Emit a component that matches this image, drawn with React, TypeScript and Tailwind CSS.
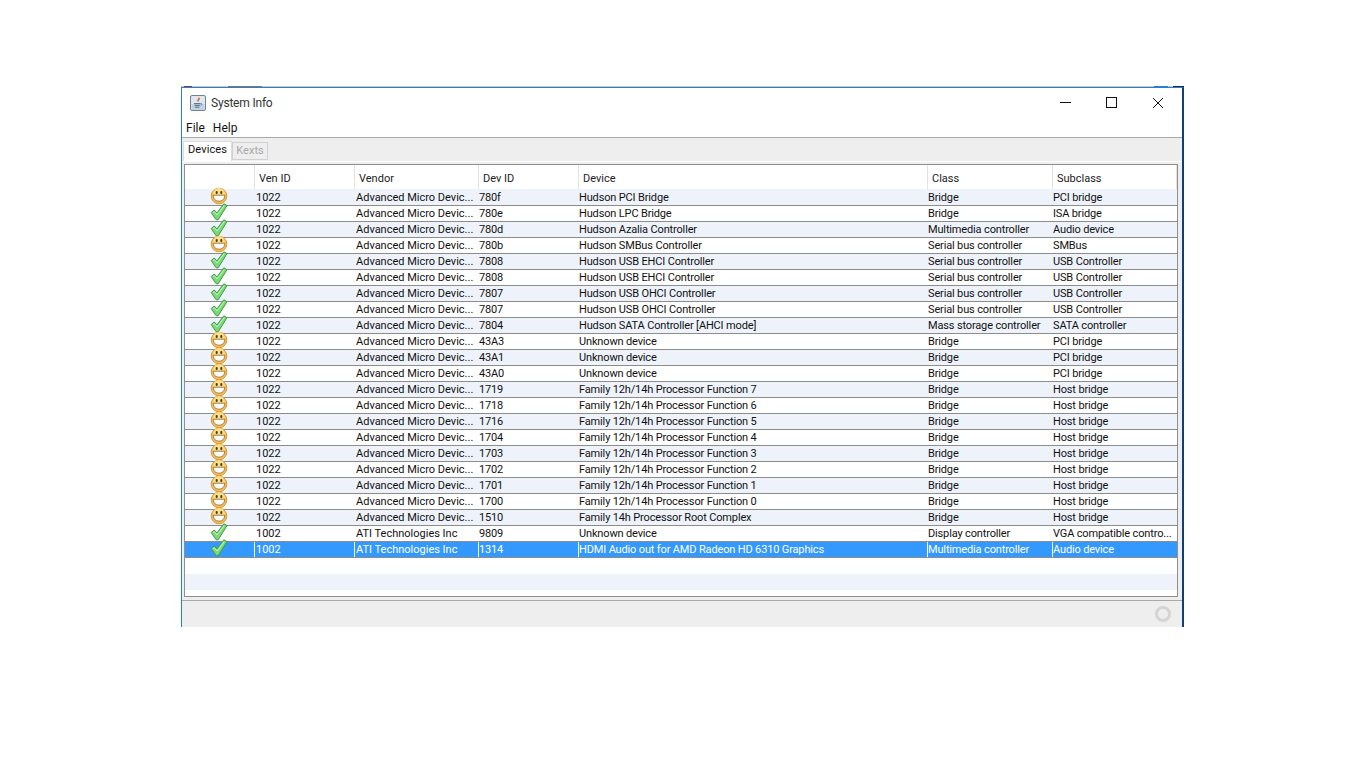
import React from "react";

type Row = [string, string, string, string, string, string, string];
const A = "Advanced Micro Devic...";
const rows: Row[] = [
  ["s","1022",A,"780f","Hudson PCI Bridge","Bridge","PCI bridge"],
  ["c","1022",A,"780e","Hudson LPC Bridge","Bridge","ISA bridge"],
  ["c","1022",A,"780d","Hudson Azalia Controller","Multimedia controller","Audio device"],
  ["s","1022",A,"780b","Hudson SMBus Controller","Serial bus controller","SMBus"],
  ["c","1022",A,"7808","Hudson USB EHCI Controller","Serial bus controller","USB Controller"],
  ["c","1022",A,"7808","Hudson USB EHCI Controller","Serial bus controller","USB Controller"],
  ["c","1022",A,"7807","Hudson USB OHCI Controller","Serial bus controller","USB Controller"],
  ["c","1022",A,"7807","Hudson USB OHCI Controller","Serial bus controller","USB Controller"],
  ["c","1022",A,"7804","Hudson SATA Controller [AHCI mode]","Mass storage controller","SATA controller"],
  ["s","1022",A,"43A3","Unknown device","Bridge","PCI bridge"],
  ["s","1022",A,"43A1","Unknown device","Bridge","PCI bridge"],
  ["s","1022",A,"43A0","Unknown device","Bridge","PCI bridge"],
  ["s","1022",A,"1719","Family 12h/14h Processor Function 7","Bridge","Host bridge"],
  ["s","1022",A,"1718","Family 12h/14h Processor Function 6","Bridge","Host bridge"],
  ["s","1022",A,"1716","Family 12h/14h Processor Function 5","Bridge","Host bridge"],
  ["s","1022",A,"1704","Family 12h/14h Processor Function 4","Bridge","Host bridge"],
  ["s","1022",A,"1703","Family 12h/14h Processor Function 3","Bridge","Host bridge"],
  ["s","1022",A,"1702","Family 12h/14h Processor Function 2","Bridge","Host bridge"],
  ["s","1022",A,"1701","Family 12h/14h Processor Function 1","Bridge","Host bridge"],
  ["s","1022",A,"1700","Family 12h/14h Processor Function 0","Bridge","Host bridge"],
  ["s","1022",A,"1510","Family 14h Processor Root Complex","Bridge","Host bridge"],
  ["c","1002","ATI Technologies Inc","9809","Unknown device","Display controller","VGA compatible contro..."],
  ["c","1002","ATI Technologies Inc","1314","HDMI Audio out for AMD Radeon HD 6310 Graphics","Multimedia controller","Audio device"],
];

const widths = ["w-[70px]","w-[100px]","w-[124px]","w-[100px]","w-[349px]","w-[125px]","w-[124px]"];

function Smile() {
  return (
    <svg width="18" height="18" viewBox="0 0 18 18">
      <circle cx="9" cy="9" r="7.8" fill="#f5bf52" stroke="#d89a3c" strokeWidth="1" />
      <circle cx="9" cy="6.8" r="5.8" fill="#fbdf8a" />
      <rect x="5.7" y="4" width="2" height="3" rx="1" fill="#54391a" />
      <rect x="10.3" y="4" width="2" height="3" rx="1" fill="#54391a" />
      <path d="M3.2 8.2h11.6c0 3.8-2.5 6-5.8 6s-5.8-2.2-5.8-6z" fill="#fff" stroke="#8a6228" strokeWidth="0.8" />
    </svg>
  );
}

function Check() {
  return (
    <svg width="18" height="18" viewBox="0 0 18 18">
      <path d="M1.2 9.6 L4.2 7 L6.9 10 L13.8 0.8 L17 2.6 L8.2 16.8 L6.2 16.8 Z" fill="#7bd977" stroke="#3d9c48" strokeWidth="1" strokeLinejoin="round" />
      <path d="M3.2 9.6 L4.3 8.7 L7.2 12 L14.2 2.6" fill="none" stroke="#c9f4c4" strokeWidth="1" />
    </svg>
  );
}

function JavaIcon() {
  return (
    <svg width="16" height="16" viewBox="0 0 16 16">
      <rect x="0.5" y="0.5" width="15" height="15" rx="1.5" fill="#dfe6ee" stroke="#6f8296" />
      <rect x="1.5" y="9" width="13" height="6" fill="#c3d0de" />
      <path d="M8.5 1.8c1.2 1.6-2 2.6-1 4.4 .4 .7 1.2 .9 1.2 .9-1.4-1.2 2-2.4 .9-4.2-.3-.4-.7-.8-1.1-1.1z" fill="#e2571e" />
      <path d="M4 8.6h6.5M4.6 10.4h5.2M5 12.2h4.4" stroke="#4f6f96" strokeWidth="1" fill="none" />
      <path d="M10.6 8.4c1.8-.2 1.8 1.6 0 1.8" stroke="#4f6f96" strokeWidth="0.8" fill="none" />
    </svg>
  );
}

export default function App() {
  return (
    <div
      className="h-[768px] w-[1366px] overflow-hidden bg-white pl-[181px] pt-[86px] text-[11px] text-[#111]"
      style={{ fontFamily: 'Roboto, "Liberation Sans", sans-serif' }}
    >
      <div className="w-[1003px]">
        <div className="flex h-[1px] bg-[#c8c8c8]">
          <div className="ml-[3px] w-[8px] bg-[#6a4a4a]" />
          <div className="ml-[36px] w-[34px] bg-[#8a6f70]" />
          <div className="ml-[892px] w-[14px] bg-[#2a7fd0]" />
          <div className="ml-[5px] w-[11px] bg-[#10304f]" />
        </div>
        <div className="flex h-[540px] flex-col border-l border-r-2 border-t border-l-[#2a7fd0] border-r-[#0f3f78] border-t-[#2a7fd0] bg-white">
          <div className="flex h-[29px] shrink-0 items-center pl-[8px] pt-[1px]">
            <JavaIcon />
            <span className="ml-[5px] text-[12px] tracking-[-0.2px] text-[#333]">System Info</span>
            <div className="ml-auto flex h-full items-center pb-[1px]">
              <svg className="mr-[35px]" width="11" height="11" viewBox="0 0 11 11"><path d="M0 5.5h11" stroke="#111" strokeWidth="1" /></svg>
              <svg className="mr-[35px]" width="11" height="11" viewBox="0 0 11 11"><rect x="0.5" y="0.5" width="10" height="10" fill="none" stroke="#111" /></svg>
              <svg className="mr-[18px]" width="12" height="12" viewBox="0 0 12 12"><path d="M1 1l10 10M11 1L1 11" stroke="#111" strokeWidth="1" /></svg>
            </div>
          </div>
          <div className="flex h-[20px] shrink-0 items-center gap-[8px] pl-[4px] pt-[2px] text-[12px] text-[#111]">
            <span>File</span>
            <span>Help</span>
          </div>
          <div className="flex min-h-0 flex-1 flex-col border-t border-[#a9a9a9] bg-[#eeeeee]">
            <div className="flex h-[23px] shrink-0 items-end pl-[1px]">
              <div className="flex h-[20px] w-[49px] items-center justify-center border-l border-r border-t border-[#dcdcdc] bg-white pb-[2px] text-[11px] tracking-[0.1px] text-[#111]">Devices</div>
              <div className="mb-[1px] flex h-[18px] w-[36px] items-center justify-center border border-[#d0d0d0] pt-[1px] text-[#a8a8a8]">Kexts</div>
            </div>
            <div className="h-[1px] shrink-0 bg-white" />
            <div className="ml-[2px] mt-[2px] flex h-[433px] w-[994px] shrink-0 flex-col border border-[#8f8f8f] bg-white">
              <div className="flex h-[24px] shrink-0 items-center bg-white">
                {["", "Ven ID", "Vendor", "Dev ID", "Device", "Class", "Subclass"].map((h, i) => (
                  <div key={i} className={`${widths[i]} flex h-full shrink-0 items-center border-r border-[#e2e2e2] pl-[4px] pt-[5px] text-[#222]`}>
                    {h}
                  </div>
                ))}
              </div>
              <div className="h-[1px] shrink-0 bg-[#eef3fb]" />
              {rows.map((r, idx) => {
                const sel = idx === rows.length - 1;
                return (
                  <div
                    key={idx}
                    className={`flex h-[16px] shrink-0 border-b border-[#8c8c8c] ${sel ? "bg-[#3399ff] text-white" : idx % 2 === 0 ? "bg-[#eef3fb]" : "bg-white"}`}
                  >
                    {r.map((c, i) => (
                      <div
                        key={i}
                        className={`${widths[i]} flex shrink-0 items-center whitespace-nowrap leading-[15px] ${i === 0 ? "justify-center pr-[2px]" : i === 1 || i === 2 ? "pl-[1px]" : "tracking-[-0.15px]"} ${i < 6 ? (sel ? "border-r border-white" : "border-r border-transparent") : ""}`}
                      >
                        {i === 0 ? (
                          <span className="relative z-10 -mt-[3px] block h-[18px] w-[18px]">{c === "s" ? <Smile /> : <Check />}</span>
                        ) : c}
                      </div>
                    ))}
                  </div>
                );
              })}
              <div className="h-[16px] shrink-0 bg-white" />
              <div className="h-[16px] shrink-0 bg-[#eef3fb]" />
            </div>
            <div className="mt-[3px] flex min-h-0 flex-1 items-center justify-end border-t border-[#a9a9a9] pr-[11px]">
              <div className="h-[16px] w-[16px] rounded-full border-[3px] border-[#d4d4d4]" />
            </div>
          </div>
        </div>
      </div>
    </div>
  );
}
